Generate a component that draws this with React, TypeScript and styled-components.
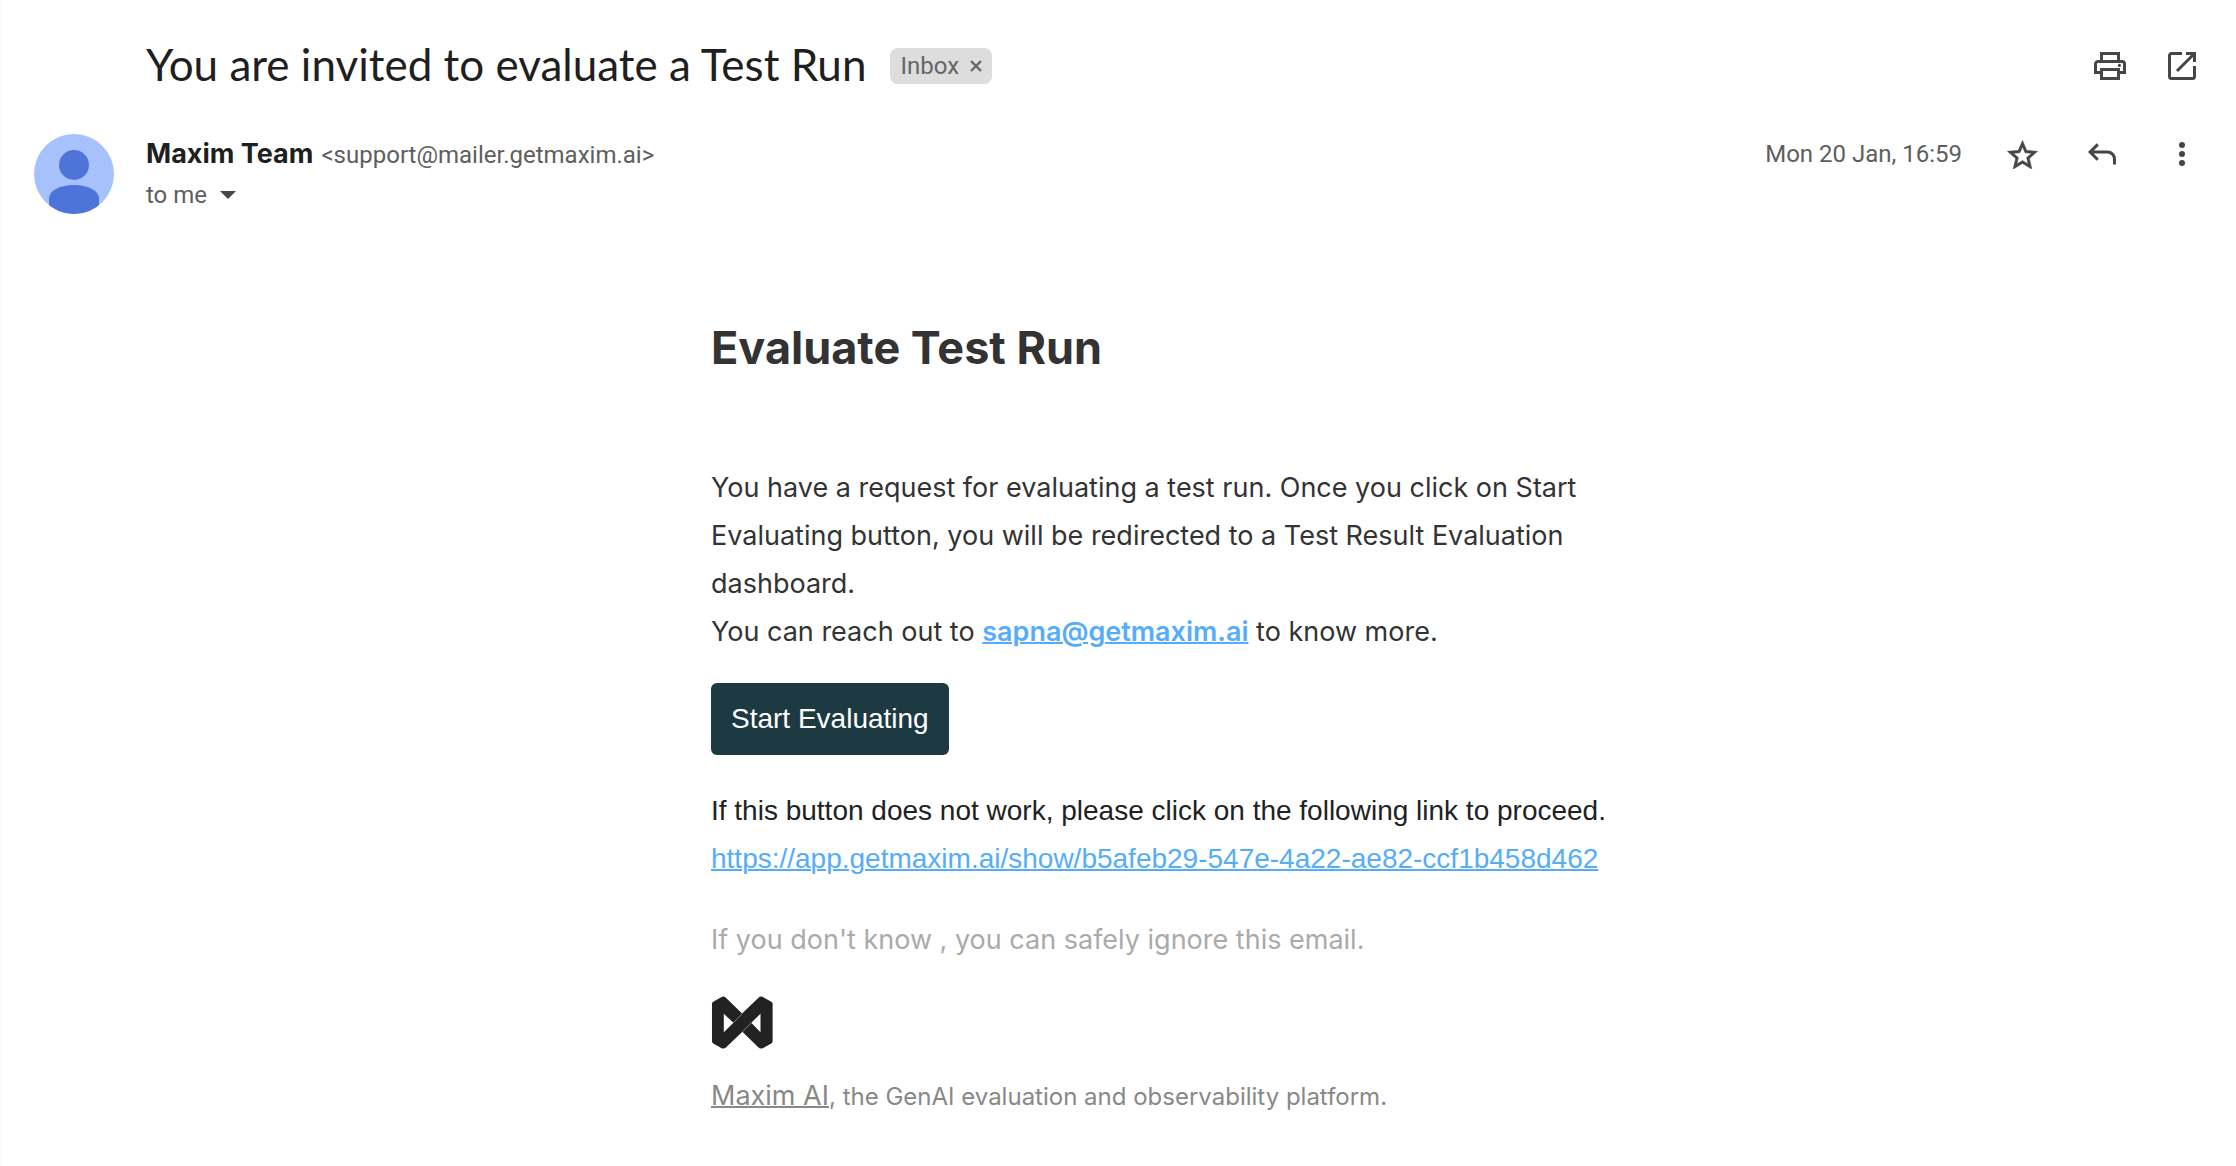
import React from "react";
import styled, { createGlobalStyle } from "styled-components";

const color = {
  ink: "#1f1f1f",
  muted: "#5e5e5e",
  icon: "#444746",
  heading: "#333333",
  link: "#55adfa",
  button: "#1d3a42",
  faint: "#aaaaaa",
  footer: "#888888",
};

const font = {
  title: `Lato, "Open Sans", sans-serif`,
  ui: `Roboto, "Open Sans", sans-serif`,
  body: `Inter, "Open Sans", sans-serif`,
  arial: `"Liberation Sans", Arial, sans-serif`,
};

const GlobalStyle = createGlobalStyle`
  *, *::before, *::after { box-sizing: border-box; }
  body { margin: 0; background: #ffffff; }
  h1, h2, p { margin: 0; }
  button { margin: 0; padding: 0; border: 0; background: none; color: inherit; font: inherit; cursor: pointer; }
  svg { display: block; }
`;

const Page = styled.main`
  min-height: 100vh;
  padding: 36px 34px 48px 32px;
  border-left: 2px solid #f8faff;
  color: ${color.ink};
  font-family: ${font.ui};
`;

const Subject = styled.header`
  display: flex;
  align-items: center;
  gap: 24px;
  min-height: 60px;
  padding-left: 112px;
`;

const Title = styled.h1`
  padding-bottom: 4px;
  font: 400 44px/56px ${font.title};
`;

const Chip = styled.span`
  display: flex;
  align-items: center;
  gap: 11px;
  height: 36px;
  padding: 0 10px;
  border-radius: 8px;
  background: #dddddd;
  color: #666666;
  font-size: 24px;
  line-height: 36px;
`;

const Actions = styled.div<{ $gap: number }>`
  display: flex;
  align-items: center;
  gap: ${(p) => p.$gap}px;
  margin-left: auto;
  color: ${color.icon};
`;

const IconButton = styled.button`
  display: grid;
  place-items: center;
  width: 40px;
  height: 40px;
`;

const Envelope = styled.section`
  display: flex;
  align-items: flex-start;
  margin-top: 38px;
`;

const Avatar = styled.svg`
  flex: none;
  width: 80px;
  height: 80px;
  margin-right: 32px;
`;

const Line = styled.div`
  display: flex;
  align-items: baseline;
  gap: 8px;
  color: ${color.muted};
  font-size: 24px;
  line-height: 40px;
`;

const Recipient = styled(Line)`
  align-items: center;
  gap: 13px;
`;

const Sender = styled.strong`
  color: ${color.ink};
  font: 700 27px/40px ${font.body};
`;

const Stamp = styled.time`
  color: ${color.muted};
  font-size: 24px;
  line-height: 40px;
`;

const Body = styled.article`
  display: flex;
  flex-direction: column;
  align-items: flex-start;
  max-width: 920px;
  margin: 103px auto 0;
  font: 400 27px/48px ${font.body};
`;

/* Centres the message between the subject's left edge and the right margin. */
const BodyArea = styled.div`
  padding: 0 6px 0 112px;
`;

const Heading = styled.h2`
  margin-bottom: 86px;
  color: ${color.heading};
  font: 700 45px/60px ${font.body};
`;

const Paragraph = styled.p`
  color: ${color.heading};
`;

const Link = styled.a<{ $strong?: boolean }>`
  color: ${color.link};
  font-weight: ${(p) => (p.$strong ? 600 : 400)};
  text-decoration: underline;
  text-decoration-thickness: 2px;
  overflow-wrap: anywhere;
`;

const StartButton = styled.button`
  height: 72px;
  margin: 27px 0 32px;
  padding: 0 20px;
  border-radius: 6px;
  background: ${color.button};
  color: #ffffff;
  font: 400 28px/72px ${font.arial};
`;

const Fallback = styled.p`
  color: #222222;
  font: 400 28px/48px ${font.arial};
`;

const Disclaimer = styled.p`
  margin: 33px 0 32px;
  color: ${color.faint};
`;

const Footer = styled.p`
  margin-top: 22px;
  color: ${color.footer};
`;

const HomeLink = styled.a`
  color: ${color.footer};
  text-decoration: underline;
  text-decoration-thickness: 2px;
`;

const Small = styled.span`
  font-size: 24px;
`;

const PrintIcon = () => (
  <svg width="32" height="28" viewBox="0 0 32 28" fill="none" stroke="currentColor" strokeWidth="3">
    <path d="M7.500 9.500v-8h17v8M7 20.500H1.500V12A2.500 2.500 0 0 1 4 9.500h24a2.500 2.500 0 0 1 2.500 2.500v8.500H25" />
    <path d="M7.500 17.500h17v9h-17z" />
    <circle cx="25.400" cy="13.400" r="1.600" fill="currentColor" stroke="none" />
  </svg>
);

const OpenIcon = () => (
  <svg width="28" height="28" viewBox="0 0 28 28" fill="none" stroke="currentColor" strokeWidth="3">
    <path d="M14 1.500H3.500a2 2 0 0 0-2 2v21a2 2 0 0 0 2 2h21a2 2 0 0 0 2-2V14" />
    <path d="M18 1.500h8.500V10M26.200 1.800 9 19" />
  </svg>
);

const StarIcon = () => (
  <svg width="31" height="30" viewBox="2 1 20 20" fill="currentColor" stroke="currentColor" strokeWidth=".4">
    <path d="M22 9.24l-7.19-.62L12 2 9.19 8.63 2 9.24l5.46 4.73L5.82 21 12 17.27 18.18 21l-1.63-7.03L22 9.24zM12 15.4l-3.76 2.27 1-4.28-3.32-2.88 4.38-.38L12 6.1l1.71 4.04 4.38.38-3.32 2.88 1 4.28L12 15.4z" />
  </svg>
);

const ReplyIcon = () => (
  <svg width="28" height="22" viewBox="0 0 28 22" fill="none" stroke="currentColor" strokeWidth="3">
    <path d="M9.800 1.400 2.100 9.100l7.700 7.700M2.100 9.100h17.400a7 7 0 0 1 7 7v5.400" />
  </svg>
);

const MoreIcon = () => (
  <svg width="6" height="24" viewBox="0 0 6 24" fill="currentColor">
    <circle cx="3" cy="3" r="3" />
    <circle cx="3" cy="12" r="3" />
    <circle cx="3" cy="21" r="3" />
  </svg>
);

const MaximLogo = () => (
  <svg width="62" height="54" viewBox="-1 0 63 54" role="img" aria-label="Maxim AI">
    <path
      fill="#222222"
      fillRule="evenodd"
      d="M0 7.4Q0 6 1.3 5.4L9.3.8Q12-.7 14.4 1.5L30.6 17.4 47 1.5Q49.3-.7 52 .8l8.3 4.6Q61.6 6 61.6 7.4V45.6Q61.6 47 60.3 47.8L52 52.4Q49.3 53.8 47 51.7L30.9 36 14.4 51.7Q12 53.8 9.3 52.4L1.3 47.8Q0 47 0 45.6ZM12 17.6V36.4L21.8 26.8ZM49.3 17.6 39.9 26.8 49.3 36.4Z"
    />
    <path d="M21.8 26.8 30.7 17.4M39.9 26.8 30.9 36" stroke="#a8a8a8" strokeWidth=".7" />
  </svg>
);

export default function App() {
  return (
    <>
      <GlobalStyle />
      <Page>
        <Subject>
          <Title>You are invited to evaluate a Test Run</Title>
          <Chip>
            Inbox
            <button aria-label="Remove label Inbox">
              <svg width="12" height="12" viewBox="0 0 12 12" stroke="currentColor" strokeWidth="2.4">
                <path d="M1 1l10 10M11 1 1 11" />
              </svg>
            </button>
          </Chip>
          <Actions $gap={32}>
            <IconButton aria-label="Print"><PrintIcon /></IconButton>
            <IconButton aria-label="Open in new window"><OpenIcon /></IconButton>
          </Actions>
        </Subject>

        <Envelope>
          <Avatar viewBox="0 0 80 80" aria-hidden="true">
            <clipPath id="avatar"><circle cx="40" cy="40" r="40" /></clipPath>
            <g clipPath="url(#avatar)">
              <path fill="#a6c1fc" d="M0 0h80v80H0z" />
              <circle cx="40" cy="31" r="15" fill="#4f74d9" />
              <path fill="#4f74d9" d="M15 80V65C15 56 27 51 40 51s25 5 25 14v15z" />
            </g>
          </Avatar>
          <div>
            <Line>
              <Sender>Maxim Team</Sender>
              <span>&lt;support@mailer.getmaxim.ai&gt;</span>
            </Line>
            <Recipient>
              <span>to me</span>
              <button aria-label="Show details">
                <svg width="16" height="8" viewBox="0 0 16 8" fill={color.icon}>
                  <path d="M0 0h16L8 8z" />
                </svg>
              </button>
            </Recipient>
          </div>
          <Actions $gap={40}>
            <Stamp>Mon 20 Jan, 16:59</Stamp>
            <IconButton aria-label="Star"><StarIcon /></IconButton>
            <IconButton aria-label="Reply"><ReplyIcon /></IconButton>
            <IconButton aria-label="More"><MoreIcon /></IconButton>
          </Actions>
        </Envelope>

        <BodyArea>
          <Body>
            <Heading>Evaluate Test Run</Heading>
            <Paragraph>
              You have a request for evaluating a test run. Once you click on Start Evaluating
              button, you will be redirected to a Test Result Evaluation dashboard.
              <br />
              You can reach out to{" "}
              <Link $strong href="mailto:sapna@getmaxim.ai">sapna@getmaxim.ai</Link> to know more.
            </Paragraph>
            <StartButton>Start Evaluating</StartButton>
            <Fallback>
              If this button does not work, please click on the following link to proceed.
              <br />
              <Link href="https://app.getmaxim.ai/show/b5afeb29-547e-4a22-ae82-ccf1b458d462">
                https://app.getmaxim.ai/show/b5afeb29-547e-4a22-ae82-ccf1b458d462
              </Link>
            </Fallback>
            <Disclaimer>If you don't know , you can safely ignore this email.</Disclaimer>
            <MaximLogo />
            <Footer>
              <HomeLink href="https://getmaxim.ai">Maxim AI</HomeLink>
              <Small>, the GenAI evaluation and observability platform.</Small>
            </Footer>
          </Body>
        </BodyArea>
      </Page>
    </>
  );
}
